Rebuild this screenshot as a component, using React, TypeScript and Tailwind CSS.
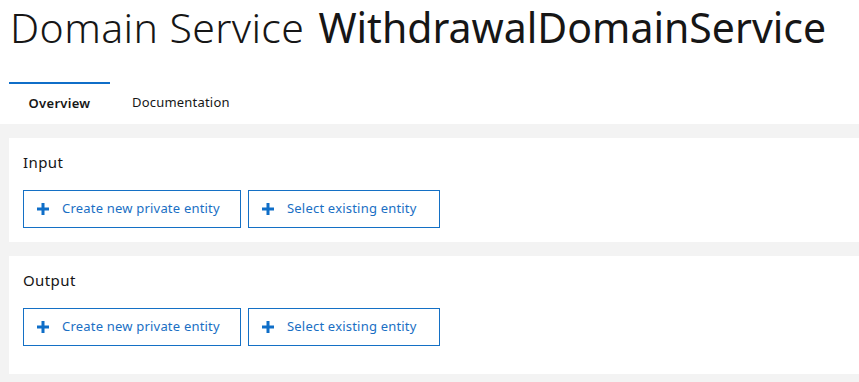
import React from "react";

function Plus() {
  return (
    <svg width="12" height="12" viewBox="0 0 12 12" className="shrink-0">
      <rect x="4.5" y="0" width="3" height="12" fill="#0f6ec8" />
      <rect x="0" y="4.5" width="12" height="3" fill="#0f6ec8" />
    </svg>
  );
}

function Btn({ label, w }: { label: string; w: string }) {
  return (
    <button
      className={`${w} h-[38px] border border-[#1470c5] flex items-center pl-[13px] gap-[13px] text-[13px] tracking-[0.2px] text-[#1a6fc4] bg-white`}
    >
      <Plus />
      <span>{label}</span>
    </button>
  );
}

function Panel({ title, pb }: { title: string; pb: string }) {
  return (
    <div className={`bg-white pl-[14px] pt-[14px] ${pb}`}>
      <div className="text-[15px] tracking-[0.4px] leading-[20px] text-[#161616]">{title}</div>
      <div className="mt-[18px] flex gap-[7px]">
        <Btn label="Create new private entity" w="w-[218px]" />
        <Btn label="Select existing entity" w="w-[192px]" />
      </div>
    </div>
  );
}

export default function App() {
  return (
    <div
      className="w-[859px] h-[382px] bg-white overflow-hidden"
      style={{ fontFamily: "'Noto Sans', 'Open Sans', sans-serif" }}
    >
      <h1 className="pl-[10px] pt-[2px] h-[54px] text-[41px] leading-[50px] text-[#161616] whitespace-nowrap">
        <span className="font-light tracking-[0.4px]">Domain Service </span>
        <span className="font-normal ml-[3px]">WithdrawalDomainService</span>
      </h1>
      <div className="mt-[28px] flex pl-[9px] h-[42px]">
        <div className="w-[101px] border-t-2 border-[#0f6ec8] flex items-center justify-center text-[13px] tracking-[0.3px] font-semibold text-[#161616]">
          Overview
        </div>
        <div className="pl-[22px] flex items-center text-[13px] tracking-[0.2px] text-[#161616]">
          Documentation
        </div>
      </div>
      <div className="bg-[#f3f3f3] pl-[9px] pt-[14px] pb-[20px] flex flex-col gap-[14px]">
        <Panel title="Input" pb="pb-[14px]" />
        <Panel title="Output" pb="pb-[28px]" />
      </div>
    </div>
  );
}
